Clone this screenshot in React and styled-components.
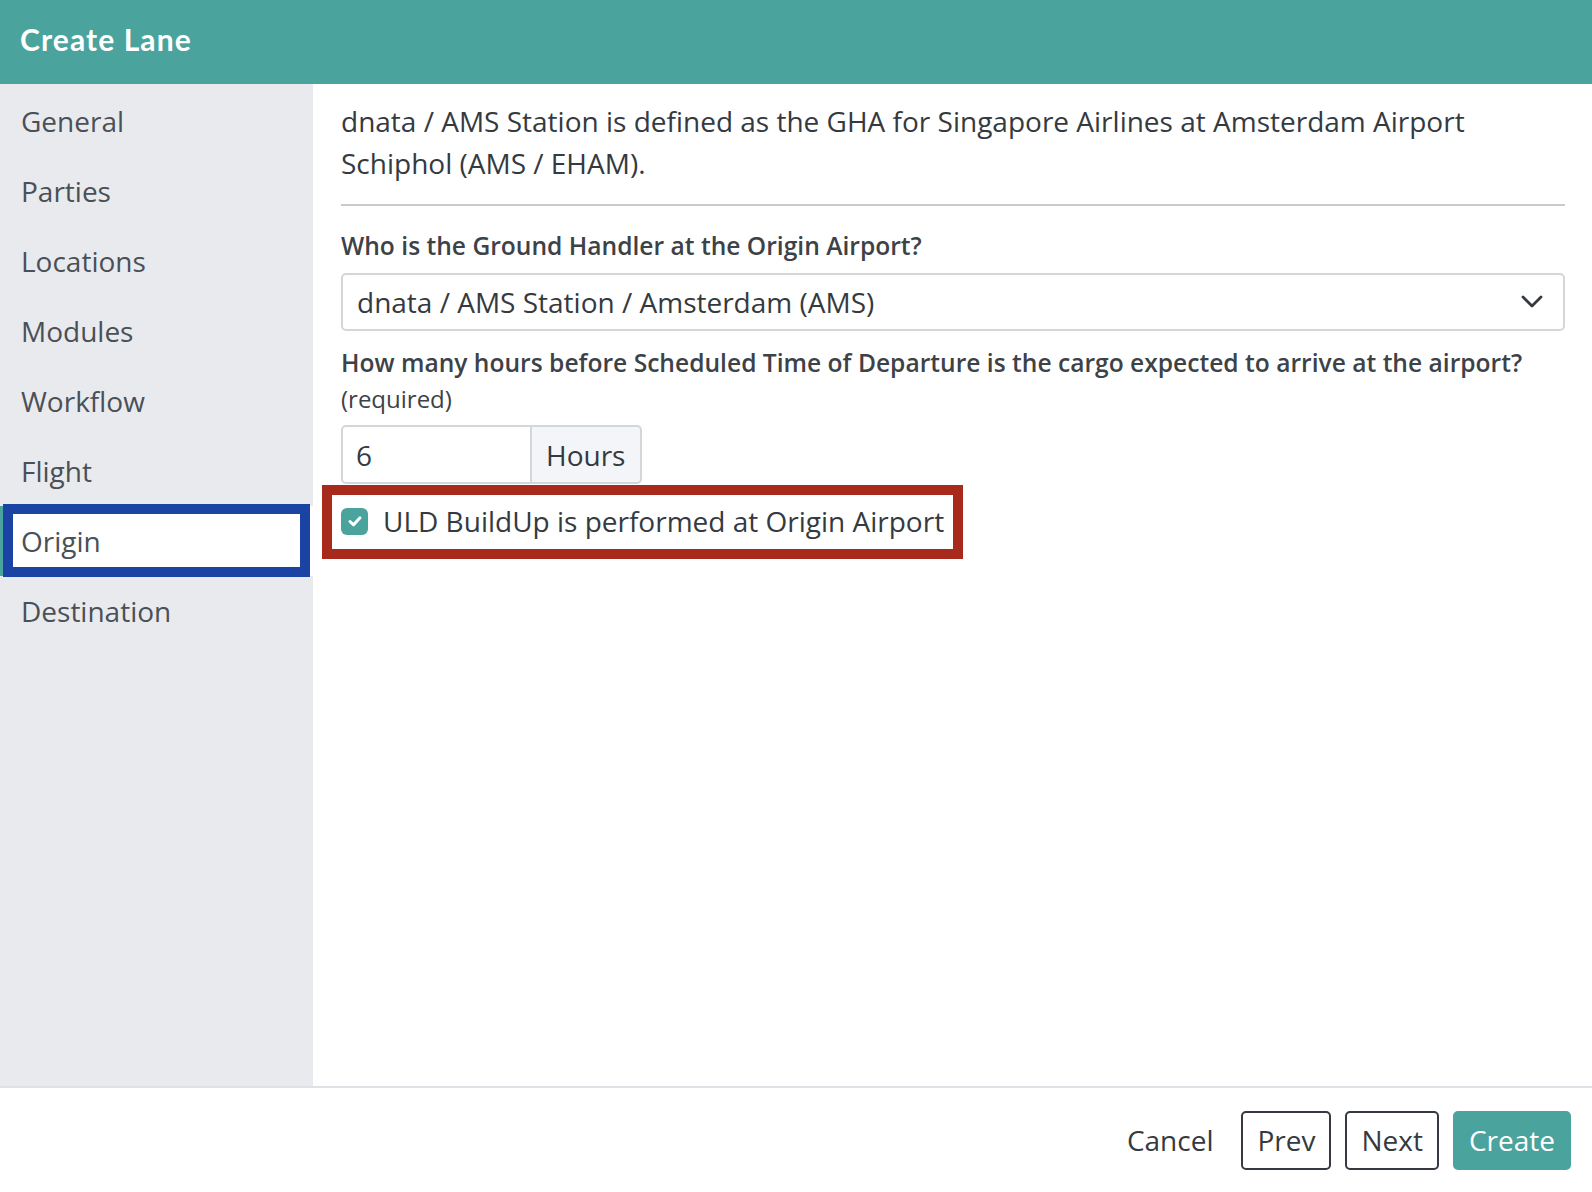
import React from 'react';
import styled, { createGlobalStyle } from 'styled-components';

const teal = '#4aa39c';

const Global = createGlobalStyle`
  html, body { margin: 0; padding: 0; background: #fff; }
  body { font-family: "Open Sans", "Noto Sans", sans-serif; color: #343a40; }
  * { box-sizing: border-box; }
`;

const sections = ['General', 'Parties', 'Locations', 'Modules', 'Workflow', 'Flight', 'Origin', 'Destination'];

const App = () => {
  return (
    <Page>
      <Global />
      <Header>
        <Title>Create Lane</Title>
      </Header>
      <Body>
        <Sidebar>
          {sections.map((s) => (
            <NavItem key={s} active={s === 'Origin'}>
              {s}
              {s === 'Origin' && <BlueMark />}
            </NavItem>
          ))}
        </Sidebar>
        <Main>
          <Intro>
            dnata / AMS Station is defined as the GHA for Singapore Airlines at Amsterdam Airport Schiphol (AMS / EHAM).
          </Intro>
          <Divider />
          <Label>Who is the Ground Handler at the Origin Airport?</Label>
          <Select>
            <span>dnata / AMS Station / Amsterdam (AMS)</span>
            <svg width="22" height="14" viewBox="0 0 22 14">
              <polyline points="2,2 11,11 20,2" fill="none" stroke="#343a40" strokeWidth="2.8" strokeLinecap="round" strokeLinejoin="round" />
            </svg>
          </Select>
          <Label spaced>How many hours before Scheduled Time of Departure is the cargo expected to arrive at the airport?</Label>
          <Hint>(required)</Hint>
          <InputGroup>
            <NumberField>6</NumberField>
            <Addon>Hours</Addon>
          </InputGroup>
          <CheckRow>
            <Box>
              <svg width="18" height="18" viewBox="0 0 18 18">
                <polyline points="4,9.5 7.6,12.8 14,5.8" fill="none" stroke="#fff" strokeWidth="3" strokeLinecap="round" strokeLinejoin="round" />
              </svg>
            </Box>
            ULD BuildUp is performed at Origin Airport
            <RedMark />
          </CheckRow>
        </Main>
      </Body>
      <Footer>
        <LinkButton>Cancel</LinkButton>
        <Button>Prev</Button>
        <Button>Next</Button>
        <Button primary>Create</Button>
      </Footer>
    </Page>
  );
};

const Page = styled.div`
  display: flex;
  flex-direction: column;
  height: 100vh;
`;

const Header = styled.header`
  height: 84px;
  flex: none;
  background: ${teal};
  display: flex;
  align-items: center;
  padding: 0 20px 7px;
`;

const Title = styled.h1`
  margin: 0;
  color: #fff;
  font-family: Lato, "Open Sans", sans-serif;
  font-weight: 700;
  font-size: 30px;
  letter-spacing: 1.1px;
`;

const Body = styled.div`
  flex: 1;
  display: flex;
  min-height: 0;
`;

const Sidebar = styled.nav`
  width: 313px;
  flex: none;
  background: #e9eaee;
  padding-top: 2px;
`;

const NavItem = styled.div`
  position: relative;
  height: 70px;
  display: flex;
  align-items: center;
  font-size: 28px;
  color: #495057;
  background: ${(p) => (p.active ? '#fff' : 'transparent')};
  border-left: ${(p) => (p.active ? `3px solid ${teal}` : 'none')};
  padding-left: ${(p) => (p.active ? '18px' : '21px')};
`;

const BlueMark = styled.span`
  position: absolute;
  top: -2px;
  bottom: -1px;
  left: 0;
  right: 3px;
  border: 10px solid #1a43a3;
  pointer-events: none;
`;

const Main = styled.main`
  flex: 1;
  padding: 16px 27px 0 28px;
`;

const Intro = styled.p`
  margin: 0;
  font-size: 28px;
  line-height: 42px;
  color: #343a40;
`;

const Divider = styled.hr`
  margin: 20px 0 22px;
  border: 0;
  border-top: 2px solid #c8cacc;
`;

const Label = styled.div`
  font-size: 24.6px;
  line-height: 36px;
  font-weight: 600;
  color: #3d4247;
  margin-top: ${(p) => (p.spaced ? '14px' : '0')};
`;

const Hint = styled.div`
  font-size: 24px;
  line-height: 36px;
  color: #3d4247;
`;

const Select = styled.div`
  margin-top: 9px;
  height: 58px;
  border: 2px solid #d4d7da;
  border-radius: 5px;
  display: flex;
  align-items: center;
  justify-content: space-between;
  padding: 0 20px 0 14px;
  font-size: 28px;
  color: #343a40;
`;

const InputGroup = styled.div`
  margin-top: 8px;
  display: flex;
  height: 59px;
  width: 301px;
`;

const NumberField = styled.div`
  width: 191px;
  border: 2px solid #d4d7da;
  border-radius: 5px 0 0 5px;
  display: flex;
  align-items: center;
  padding-left: 13px;
  font-size: 28px;
`;

const Addon = styled.div`
  flex: 1;
  border: 2px solid #d4d7da;
  border-left: 0;
  border-radius: 0 5px 5px 0;
  background: #f4f5f8;
  display: flex;
  align-items: center;
  padding-left: 14px;
  font-size: 28px;
`;

const CheckRow = styled.label`
  position: relative;
  margin-top: 16px;
  display: inline-flex;
  align-items: center;
  gap: 15px;
  height: 42px;
  font-size: 28px;
  color: #343a40;
`;

const Box = styled.span`
  width: 27px;
  height: 27px;
  border-radius: 6px;
  background: ${teal};
  display: flex;
  align-items: center;
  justify-content: center;
`;

const RedMark = styled.span`
  position: absolute;
  top: -15px;
  bottom: -17px;
  left: -19px;
  right: -19px;
  border: 10px solid #a82a1c;
  pointer-events: none;
`;

const Footer = styled.footer`
  flex: none;
  height: 106px;
  border-top: 2px solid #dee2e6;
  display: flex;
  align-items: center;
  justify-content: flex-end;
  gap: 14px;
  padding-right: 21px;
`;

const Button = styled.button`
  height: 59px;
  padding: 0 14px;
  font-family: "Open Sans", sans-serif;
  font-size: 28px;
  color: ${(p) => (p.primary ? '#fff' : '#343a40')};
  background: ${(p) => (p.primary ? teal : '#fff')};
  border: 2px solid ${(p) => (p.primary ? teal : '#343a40')};
  border-radius: 5px;
`;

const LinkButton = styled(Button)`
  border-color: transparent;
  background: transparent;
  margin-right: -2px;
`;

export default App;
